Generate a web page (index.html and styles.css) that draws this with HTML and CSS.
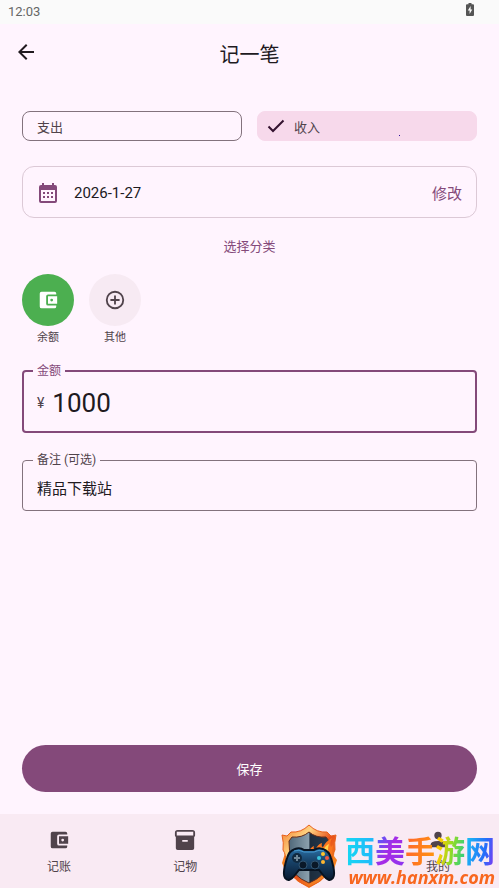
FILE: index.html
```html
<!DOCTYPE html>
<html lang="zh-CN">
<head>
    <meta charset="UTF-8">
    <meta name="viewport" content="width=device-width, initial-scale=1.0">
    <title>记一笔</title>
    <link rel="stylesheet" href="styles.css">
</head>
<body>
    <div class="status-bar">
        <span>12:03</span>
        <svg class="battery" viewBox="0 0 8 13"><path fill="#555" d="M2.5 0h3v1.2H7q1 0 1 1V12q0 1-1 1H1q-1 0-1-1V2.200q0-1 1-1h1.500z"/><path fill="#fafafa" d="M4.600 3 1.800 7.600h1.800V11l2.700-4.600H4.600z"/></svg>
    </div>

    <header class="app-bar">
        <button class="back" type="button" aria-label="返回">
            <svg viewBox="0 0 24 24"><path d="M20 11H7.830l5.590-5.590L12 4l-8 8 8 8 1.410-1.410L7.830 13H20z"/></svg>
        </button>
        <h1>记一笔</h1>
    </header>

    <main>
        <form class="entry-form">
            <div class="chips">
                <label class="chip">
                    <input type="radio" name="type" value="out">支出
                </label>
                <label class="chip chip-selected">
                    <input type="radio" name="type" value="in" checked>
                    <svg viewBox="0 0 18 14"><path d="M1.500 7.500 6 12 16.500 1.500"/></svg>收入
                </label>
            </div>

            <div class="date-card">
                <svg class="calendar" viewBox="0 0 18 20">
                    <path fill-rule="evenodd" d="M3 0h2v2h8V0h2v2h1q2 0 2 2v14q0 2-2 2H2q-2 0-2-2V4q0-2 2-2h1zM2 7v11h14V7z"/>
                    <path d="M4 9h2v2H4zM8 9h2v2H8zM12 9h2v2h-2zM4 13h2v2H4zM8 13h2v2H8zM12 13h2v2h-2z"/>
                </svg>
                <span class="date">2026-1-27</span>
                <button class="edit" type="button">修改</button>
            </div>

            <h2>选择分类</h2>

            <div class="categories">
                <button class="category" type="button">
                    <span class="circle circle-green">
                        <svg viewBox="0 0 24 24"><path d="M21 18v1q0 2-2 2H5q-2 0-2-2V5q0-2 2-2h14q2 0 2 2v1h-9q-2 0-2 2v8q0 2 2 2z"/><path fill-rule="evenodd" d="M12 8h10v8H12zM16 10.500a1.500 1.500 0 1 0 0 3 1.500 1.500 0 1 0 0-3z"/></svg>
                    </span>
                    余额
                </button>
                <button class="category" type="button">
                    <span class="circle">
                        <svg viewBox="0 0 24 24"><path d="M13 7h-2v4H7v2h4v4h2v-4h4v-2h-4zM12 2a10 10 0 1 0 0 20 10 10 0 1 0 0-20zm0 18a8 8 0 1 1 0-16 8 8 0 1 1 0 16z"/></svg>
                    </span>
                    其他
                </button>
            </div>

            <fieldset class="field field-focused">
                <legend><label for="amount">金额</label></legend>
                <span class="prefix">¥</span>
                <input id="amount" type="text" inputmode="decimal" value="1000">
            </fieldset>

            <fieldset class="field">
                <legend><label for="note">备注 (可选)</label></legend>
                <input id="note" type="text" value="精品下载站">
            </fieldset>

            <button class="save" type="button">保存</button>
        </form>
    </main>

    <nav class="bottom-nav">
        <a href="#account">
            <svg viewBox="0 0 24 24"><path d="M21 18v1q0 2-2 2H5q-2 0-2-2V5q0-2 2-2h14q2 0 2 2v1h-9q-2 0-2 2v8q0 2 2 2z"/><path fill-rule="evenodd" d="M12 8h10v8H12zM16 10.500a1.500 1.500 0 1 0 0 3 1.500 1.500 0 1 0 0-3z"/></svg>
            记账
        </a>
        <a href="#items">
            <svg viewBox="0 0 24 24"><path fill-rule="evenodd" d="M20 1H4Q1 1 1 4v3q0 1 1 1.700V21q0 2 2 2h16q2 0 2-2V8.700q1-.7 1-1.700V4q0-3-3-3zm-5 13H9v-2h6zm6-7H3V3h18z"/></svg>
            记物
        </a>
        <a class="nav-mine" href="#mine">
            <svg viewBox="0 0 24 24"><circle cx="12" cy="7" r="4"/><path d="M4 20v-3q0-4 8-4t8 4v3z"/></svg>
            我的
        </a>
    </nav>

    <div class="watermark">
        <svg class="shield" viewBox="0 0 56 64">
            <defs>
                <linearGradient id="rim" x1="0" y1="0" x2="1" y2="1">
                    <stop offset="0" stop-color="#f0782a"/>
                    <stop offset=".3" stop-color="#ffd583"/>
                    <stop offset=".55" stop-color="#e8501a"/>
                    <stop offset="1" stop-color="#ffae28"/>
                </linearGradient>
                <linearGradient id="steel" x1="0" y1="0" x2="1" y2="0">
                    <stop offset="0" stop-color="#50687a"/>
                    <stop offset=".5" stop-color="#8ba0ad"/>
                    <stop offset=".52" stop-color="#1c2c3c"/>
                    <stop offset="1" stop-color="#243a50"/>
                </linearGradient>
                <linearGradient id="pad" x1="0" y1="0" x2="0" y2="1">
                    <stop offset="0" stop-color="#2b70a6"/>
                    <stop offset=".4" stop-color="#18446b"/>
                    <stop offset="1" stop-color="#091a30"/>
                </linearGradient>
            </defs>
            <path fill="#f58220" d="M4 29 1 39l4 9 6 1 5 8 12 7 12-7 5-7 8-5 3-9-3-4 1-9-5 5V12z"/>
            <path fill="url(#rim)" stroke="#e8601c" d="M28 1Q20 9 10 8L6 12 1 11q2 8 1 15 3 4 3 13 2 15 23 24 21-9 23-24 0-9 3-13-1-7 1-15l-5 1-4-4Q36 9 28 1z"/>
            <path fill="url(#steel)" stroke="#632b1a" d="M28 8q-7 6-17 5l-3 4q1 8 0 21 3 14 20 21 17-7 20-21-1-13 0-21l-3-4Q35 14 28 8z"/>
            <path fill="#fa761e" d="M27 28q3-5 6-6-1 3 1 4 3-6 7-7-1 4 1 4 3-6 9-9-3 6-1 9l2-2-2 14H27z"/>
            <path fill="#ffd34e" d="M31 29q2-3 4-3l1 2q2-5 5-5l1 3q3-5 6-6-2 6 0 10H31z"/>
            <path fill="url(#pad)" stroke="#071321" stroke-width="2" d="M14 25q5-2 9 1h10q4-3 9-1 6 2 8 9 5 16 2 20-4 5-10-3l-4-5H18l-4 5q-6 8-10 3-3-4 2-20 2-7 8-9z"/>
            <path fill="none" stroke="#4699cd" d="M13 27q5-2 10 1h10q5-3 10-1"/>
            <circle cx="16" cy="34" r="5" fill="#112a40"/>
            <path stroke="#6f8797" stroke-width="2" d="M13 34h6M16 31v6"/>
            <circle cx="22" cy="41" r="4" fill="#0a1828" stroke="#315572"/>
            <circle cx="34" cy="41" r="4" fill="#0a1828" stroke="#315572"/>
            <circle cx="38" cy="34" r="2" fill="#39c6de"/>
            <circle cx="42" cy="30" r="2" fill="#ffc52c"/>
            <circle cx="46" cy="34" r="2" fill="#f35840"/>
            <circle cx="42" cy="38" r="2" fill="#ffb630"/>
        </svg>
        <div class="brand">
            <div class="brand-name"><span class="c1">西</span><span class="c2">美</span><span class="c3">手</span><span class="c4">游</span><span class="c5">网</span></div>
            <div class="brand-url">www.hanxm.com</div>
        </div>
    </div>
</body>
</html>
```
FILE: styles.css
```css
* {
    box-sizing: border-box;
}

body {
    display: flex;
    flex-direction: column;
    min-height: 100vh;
    margin: 0;
    font-family: Roboto, "Noto Sans CJK SC", sans-serif;
    font-size: 13px;
    color: #211a1f;
    background-color: #fff4fe;
}

button,
input {
    font-family: inherit;
    color: inherit;
}

button {
    padding: 0;
    border: none;
    background: none;
    cursor: pointer;
}

.status-bar {
    display: flex;
    justify-content: space-between;
    height: 24px;
    padding: 3px 25px 0 8px;
    line-height: 17px;
    color: #666;
    background-color: #fafafa;
}

.battery {
    width: 8px;
    height: 13px;
}

.app-bar {
    display: grid;
    grid-template-columns: 24px 1fr 24px;
    align-items: center;
    height: 62px;
    padding: 0 14px;
}

.back {
    height: 24px;
    margin-bottom: 6px;
}

.back svg {
    display: block;
    width: 24px;
    height: 24px;
    fill: #211a1f;
}

h1 {
    margin: 0;
    font-size: 20px;
    font-weight: 400;
    line-height: 28px;
    text-align: center;
}

main {
    display: flex;
    flex: 1;
    padding: 25px 22px 22px;
}

.entry-form {
    display: flex;
    flex: 1;
    flex-direction: column;
    min-width: 0;
}

.chips {
    display: grid;
    grid-template-columns: 1fr 1fr;
    gap: 15px;
}

.chip {
    display: flex;
    align-items: center;
    height: 30px;
    padding: 0 14px;
    border: 1px solid #83727d;
    border-radius: 8px;
    color: #50434b;
    cursor: pointer;
}

.chip input {
    appearance: none;
    width: 0;
    margin: 0;
}

.chip svg {
    width: 18px;
    height: 14px;
    margin-right: 9px;
    fill: none;
    stroke: #34122f;
    stroke-width: 2;
}

.chip-selected {
    position: relative;
    padding: 0 9px;
    border-color: #f7d9eb;
    background-color: #f7d9eb;
}

.chip-selected::after {
    content: "";
    position: absolute;
    right: 76px;
    bottom: 4px;
    width: 1px;
    height: 1px;
    background-color: #30109c;
}

.date-card {
    display: flex;
    align-items: center;
    height: 52px;
    margin-top: 25px;
    padding: 1px 14px 0 16px;
    border: 1px solid #dcc9d6;
    border-radius: 12px;
    font-size: 15px;
}

.calendar {
    width: 18px;
    height: 20px;
    margin-right: 17px;
    fill: #84497a;
}

.date {
    flex: 1;
}

.edit {
    font-size: 15px;
    color: #84497a;
}

h2 {
    margin: 19px 0 17px;
    font-size: 13px;
    font-weight: 400;
    line-height: 20px;
    text-align: center;
    color: #84497a;
}

.categories {
    display: flex;
    gap: 15px;
}

.category {
    display: flex;
    flex-direction: column;
    gap: 4px;
    align-items: center;
    font-size: 11px;
    line-height: 16px;
    color: #50434b;
}

.circle {
    display: grid;
    place-items: center;
    width: 52px;
    height: 52px;
    border-radius: 50%;
    background-color: #f7eaf3;
}

.circle-green {
    background-color: #4caf50;
}

.circle svg {
    width: 22px;
    height: 22px;
    fill: #50434b;
}

.circle-green svg {
    fill: #fff;
}

/* outlined text fields, the legend cuts the border */
.field {
    display: flex;
    align-items: center;
    height: 60px;
    min-width: 0;
    margin: 18px 0 0;
    padding: 0 10px;
    border: 1px solid #83727d;
    border-radius: 4px;
}

.field legend {
    padding: 0 4px;
    font-size: 12px;
    line-height: 18px;
    color: #50434b;
}

.field input {
    flex: 1;
    min-width: 0;
    height: 36px;
    padding: 0 4px;
    border: none;
    outline: none;
    font-size: 15px;
    background: none;
}

.field-focused {
    height: 71px;
    margin-top: 16px;
    padding: 0 9px;
    border: 2px solid #84497a;
}

.field-focused legend {
    color: #84497a;
}

.field-focused input {
    height: 46px;
    font-size: 26px;
}

.prefix {
    padding: 0 4px;
    font-size: 14px;
    color: #50434b;
}

.save {
    height: 47px;
    margin-top: auto;
    border-radius: 24px;
    font-size: 13px;
    color: #fff;
    background-color: #84497a;
}

.bottom-nav {
    display: grid;
    grid-template-columns: repeat(4, 48px);
    justify-content: space-between;
    height: 74px;
    padding: 15px 37px 0 35px;
    background-color: #f9eaf3;
}

.bottom-nav a {
    display: flex;
    flex-direction: column;
    gap: 8px;
    align-items: center;
    font-size: 12px;
    line-height: 16px;
    color: #50434b;
    text-decoration: none;
}

.bottom-nav svg {
    width: 22px;
    height: 22px;
    fill: #50434b;
}

.bottom-nav .nav-mine {
    grid-column: 4;
}

.watermark {
    position: fixed;
    right: 4px;
    bottom: 0;
    display: flex;
    gap: 8px;
    pointer-events: none;
}

.shield {
    width: 56px;
    height: 64px;
}

.brand-name {
    display: flex;
    margin-top: 7px;
    font-family: "Noto Sans CJK SC", sans-serif;
    font-size: 30px;
    font-weight: 700;
    line-height: 36px;
}

.brand-name span {
    color: transparent;
    background-clip: text;
}

.c1 {
    background-image: linear-gradient(90deg, #16d9f2, #22b6fb);
}

.c2 {
    background-image: linear-gradient(120deg, #386dff, #a72be6 50%, #8937f0);
}

.c3 {
    background-image: linear-gradient(100deg, #ff6230, #ff970c);
}

.c4 {
    background-image: linear-gradient(100deg, #ffcc00 20%, #8edb28 55%, #20cc91);
}

.c5 {
    background-image: linear-gradient(100deg, #17caf2, #266cfa 65%, #8a35f0);
}

.brand-url {
    font-family: "Open Sans", sans-serif;
    font-size: 18px;
    font-style: italic;
    font-weight: 700;
    line-height: 21px;
    text-align: right;
    color: #f8671f;
}
```
